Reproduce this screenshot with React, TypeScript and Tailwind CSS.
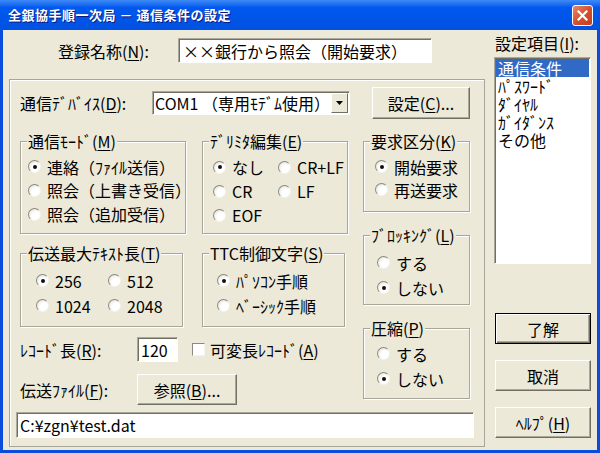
import React from 'react';

const FONT = "font-['Noto_Sans_CJK_JP','Noto_Sans',sans-serif]";

const U = ({ children }: { children: React.ReactNode }) => (
  <span className="underline underline-offset-2">{children}</span>
);

const sunken =
  'bg-white border border-t-[#ACA899] border-l-[#ACA899] border-r-white border-b-white shadow-[inset_1px_1px_0_#716F64]';

const Radio = ({ checked, label }: { checked?: boolean; label: React.ReactNode }) => (
  <div className="flex items-center h-full">
    <span className="relative w-[13px] h-[13px] shrink-0 rounded-full border border-t-[#8C8A80] border-l-[#8C8A80] border-r-[#F4F3EE] border-b-[#F4F3EE] bg-[radial-gradient(circle_at_65%_65%,#ffffff_40%,#DCD9CC)] flex items-center justify-center">
      {checked && <span className="w-[4px] h-[4px] rounded-full bg-[#111]" />}
    </span>
    <span className="ml-[6px] whitespace-nowrap">{label}</span>
  </div>
);

const Group = ({
  title,
  className,
  children,
}: {
  title: React.ReactNode;
  className: string;
  children: React.ReactNode;
}) => (
  <div
    className={`relative shrink-0 border border-[#A8A59A] shadow-[inset_1px_1px_0_#fff,1px_1px_0_#fff] ${className}`}
  >
    <span className="absolute -top-[9px] left-[6px] px-[1px] bg-[#ECE9D8] leading-[16px] whitespace-nowrap">
      {title}
    </span>
    {children}
  </div>
);

const Button = ({
  children,
  className,
  isDefault,
}: {
  children: React.ReactNode;
  className: string;
  isDefault?: boolean;
}) => (
  <button
    className={`shrink-0 bg-[#ECE9D8] flex items-center justify-center leading-none ${
      isDefault
        ? 'border border-black shadow-[inset_1px_1px_0_#fff,inset_-1px_-1px_0_#716F64,inset_-2px_-2px_0_#ACA899]'
        : 'border border-t-white border-l-white border-r-[#716F64] border-b-[#716F64] shadow-[inset_-1px_-1px_0_#ACA899]'
    } ${className}`}
  >
    {children}
  </button>
);

export default function App() {
  return (
    <div className={`w-[600px] h-[453px] bg-[#0A4CDB] flex flex-col text-[16px] text-black ${FONT}`}>
      {/* title bar */}
      <div className="h-[30px] shrink-0 flex items-center justify-between pl-[8px] pr-[7px] bg-linear-to-b from-[#3D8AF5] via-[#0058EE] via-25% to-[#0051E0]">
        <span className="text-white font-bold text-[13px] tracking-[0.5px] [text-shadow:1px_1px_0_#0A1883]">
          全銀協手順一次局 － 通信条件の設定
        </span>
        <div className="w-[21px] h-[21px] rounded-[3px] border border-white bg-linear-to-br from-[#E8886A] via-[#D8502C] to-[#C0401E] flex items-center justify-center">
          <svg width="11" height="11" viewBox="0 0 11 11">
            <path d="M1.5 1.5 L9.5 9.5 M9.5 1.5 L1.5 9.5" stroke="white" strokeWidth="2.2" strokeLinecap="square" />
          </svg>
        </div>
      </div>

      {/* body */}
      <div className="flex-1 mx-[3px] mb-[3px] bg-[#ECE9D8] flex">
        {/* left column */}
        <div className="w-[491px] shrink-0 flex flex-col">
          <div className="mt-[8px] h-[25px] flex items-center">
            <span className="ml-[55px] w-[120px] leading-[16px]">
              登録名称(<U>N</U>):
            </span>
            <div className={`w-[254px] h-[25px] flex items-center pl-[4px] ${sunken}`}>
              ××銀行から照会（開始要求）
            </div>
          </div>

          <div className="mt-[16px] ml-[6px] w-[476px] h-[368px] border border-[#A8A59A] shadow-[inset_1px_1px_0_#fff] flex flex-col">
            {/* device row */}
            <div className="mt-[7px] h-[32px] pl-[10px] flex items-center">
              <span className="w-[132px] leading-[16px]">
                通信ﾃﾞﾊﾞｲｽ(<U>D</U>):
              </span>
              <div className={`w-[198px] h-[24px] flex items-center justify-between ${sunken}`}>
                <span className="pl-[2px] leading-[16px] whitespace-nowrap">COM1 （専用ﾓﾃﾞﾑ使用）</span>
                <div className="w-[17px] h-[20px] mr-[1px] bg-[#ECE9D8] border border-t-white border-l-white border-r-[#716F64] border-b-[#716F64] flex items-center justify-center">
                  <svg width="7" height="4" viewBox="0 0 7 4">
                    <path d="M0 0 H7 L3.5 4 Z" fill="black" />
                  </svg>
                </div>
              </div>
              <Button className="ml-[22px] w-[98px] h-[32px]">
                設定(<U>C</U>)...
              </Button>
            </div>

            {/* groups */}
            <div className="mt-[22px] pl-[10px] flex items-start">
              <div className="w-[328px] shrink-0 flex flex-col">
                <div className="flex">
                  <Group title={<>通信ﾓｰﾄﾞ(<U>M</U>)</>} className="w-[166px] h-[93px]">
                    <div className="pt-[13px] pl-[7px] flex flex-col">
                      <div className="h-[23px]"><Radio checked label="連絡（ﾌｧｲﾙ送信）" /></div>
                      <div className="h-[24px]"><Radio label="照会（上書き受信）" /></div>
                      <div className="h-[24px]"><Radio label="照会（追加受信）" /></div>
                    </div>
                  </Group>
                  <Group title={<>ﾃﾞﾘﾐﾀ編集(<U>E</U>)</>} className="ml-[16px] w-[146px] h-[93px]">
                    <div className="pt-[13px] pl-[10px] grid grid-cols-[65px_auto] auto-rows-[24px]">
                      <Radio checked label="なし" />
                      <Radio label="CR+LF" />
                      <Radio label="CR" />
                      <Radio label="LF" />
                      <Radio label="EOF" />
                    </div>
                  </Group>
                </div>
                <div className="mt-[19px] flex">
                  <Group title={<>伝送最大ﾃｷｽﾄ長(<U>T</U>)</>} className="w-[163px] h-[74px]">
                    <div className="pt-[14px] pl-[15px] grid grid-cols-[72px_auto] auto-rows-[25px]">
                      <Radio checked label="256" />
                      <Radio label="512" />
                      <Radio label="1024" />
                      <Radio label="2048" />
                    </div>
                  </Group>
                  <Group title={<>TTC制御文字(<U>S</U>)</>} className="ml-[19px] w-[143px] h-[74px]">
                    <div className="pt-[14px] pl-[14px] flex flex-col">
                      <div className="h-[25px]"><Radio checked label="ﾊﾟｿｺﾝ手順" /></div>
                      <div className="h-[25px]"><Radio label="ﾍﾞｰｼｯｸ手順" /></div>
                    </div>
                  </Group>
                </div>
                <div className="mt-[10px] h-[25px] flex items-center">
                  <span className="w-[117px] leading-[16px]">
                    ﾚｺｰﾄﾞ長(<U>R</U>):
                  </span>
                  <div className={`w-[41px] h-[25px] flex items-center pl-[3px] ${sunken}`}>120</div>
                  <span className="ml-[14px] w-[13px] h-[13px] bg-white border border-t-[#8C8A80] border-l-[#8C8A80] border-r-[#F4F3EE] border-b-[#F4F3EE]" />
                  <span className="ml-[5px] leading-[16px] whitespace-nowrap">
                    可変長ﾚｺｰﾄﾞ(<U>A</U>)
                  </span>
                </div>
                <div className="mt-[12px] h-[31px] flex items-center">
                  <span className="w-[117px] leading-[16px]">
                    伝送ﾌｧｲﾙ(<U>F</U>):
                  </span>
                  <Button className="w-[100px] h-[31px]">
                    参照(<U>B</U>)...
                  </Button>
                </div>
              </div>

              <div className="ml-[15px] w-[107px] flex flex-col">
                <Group title={<>要求区分(<U>K</U>)</>} className="w-[107px] h-[71px]">
                  <div className="pt-[13px] pl-[11px] flex flex-col">
                    <div className="h-[23px]"><Radio checked label="開始要求" /></div>
                    <div className="h-[23px]"><Radio label="再送要求" /></div>
                  </div>
                </Group>
                <Group title={<>ﾌﾞﾛｯｷﾝｸﾞ(<U>L</U>)</>} className="mt-[23px] w-[107px] h-[70px]">
                  <div className="pt-[14px] pl-[13px] flex flex-col">
                    <div className="h-[25px]"><Radio label="する" /></div>
                    <div className="h-[25px]"><Radio checked label="しない" /></div>
                  </div>
                </Group>
                <Group title={<>圧縮(<U>P</U>)</>} className="mt-[23px] w-[107px] h-[71px]">
                  <div className="pt-[12px] pl-[13px] flex flex-col">
                    <div className="h-[25px]"><Radio label="する" /></div>
                    <div className="h-[25px]"><Radio checked label="しない" /></div>
                  </div>
                </Group>
              </div>
            </div>

            <div className={`mt-[7px] ml-[6px] w-[458px] h-[26px] flex items-center pl-[3px] ${sunken}`}>
              C:¥zgn¥test.dat
            </div>
          </div>
        </div>

        {/* right column */}
        <div className="w-[97px] shrink-0 flex flex-col">
          <span className="mt-[5px] ml-[1px] h-[17px] leading-[17px] whitespace-nowrap">
            設定項目(<U>I</U>):
          </span>
          <div className={`mt-[5px] w-[97px] h-[207px] pt-[1px] px-[1px] flex flex-col ${sunken}`}>
            <div className="h-[18px] leading-[18px] px-[2px] bg-[#316AC5] text-white">通信条件</div>
            <div className="h-[18px] leading-[18px] px-[2px]">ﾊﾟｽﾜｰﾄﾞ</div>
            <div className="h-[18px] leading-[18px] px-[2px]">ﾀﾞｲﾔﾙ</div>
            <div className="h-[18px] leading-[18px] px-[2px]">ｶﾞｲﾀﾞﾝｽ</div>
            <div className="h-[18px] leading-[18px] px-[2px]">その他</div>
          </div>
          <Button isDefault className="mt-[49px] ml-[1px] w-[96px] h-[31px]">了解</Button>
          <Button className="mt-[16px] ml-[1px] w-[96px] h-[31px]">取消</Button>
          <Button className="mt-[16px] ml-[1px] w-[96px] h-[31px]">
            ﾍﾙﾌﾟ(<U>H</U>)
          </Button>
        </div>
      </div>
    </div>
  );
}
